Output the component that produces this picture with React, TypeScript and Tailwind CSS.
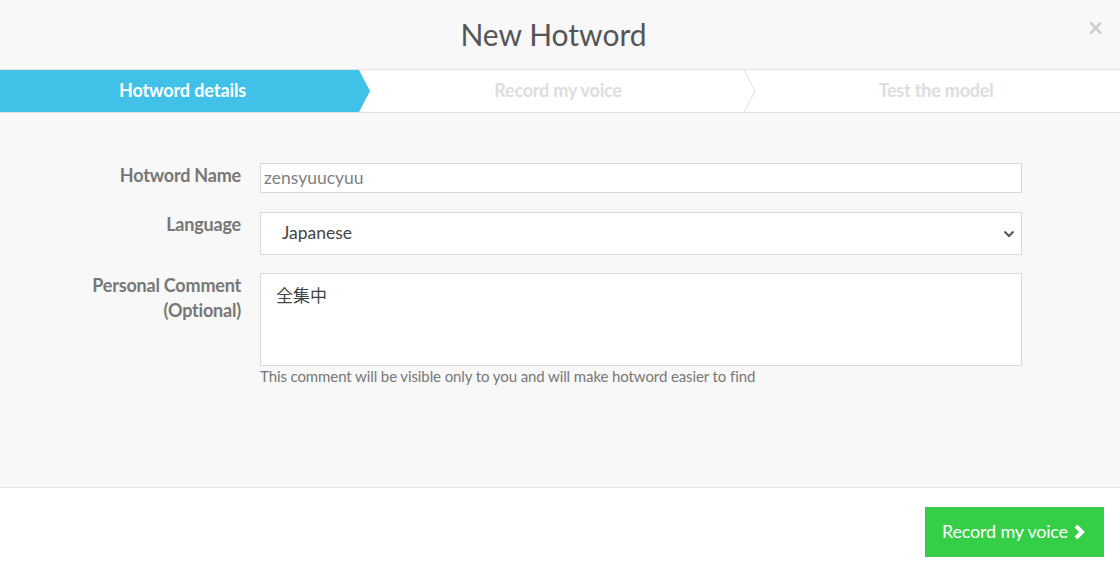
import React from "react";

function Chevron() {
  return (
    <svg width="13" height="42" viewBox="0 0 13 42" className="absolute left-[370px] top-0">
      <polyline points="1,0 12,21 1,42" fill="none" stroke="#dedede" strokeWidth="1" />
    </svg>
  );
}

export default function App() {
  return (
    <div className="w-[1120px] h-[572px] bg-white flex flex-col text-[#555]" style={{ fontFamily: "Lato, 'Noto Sans CJK JP', sans-serif" }}>
      <div className="h-[69px] bg-[#f8f8f8] relative flex items-center justify-center pr-[13px]">
        <h1 className="text-[30px] leading-none text-[#555] -mt-[2px]">New Hotword</h1>
        <span className="absolute right-[17px] top-[14px] text-[26px] leading-none text-[#cdcdcd] font-bold">×</span>
      </div>
      <div className="h-[44px] flex border-y border-[#e2e2e2] bg-white">
        <div className="w-[373px] relative">
          <div className="absolute inset-0 w-[371px] bg-[#41c0e8] [clip-path:polygon(0_0,359px_0,370px_50%,359px_100%,0_100%)]" />
          <div className="relative h-full flex items-center justify-center pr-[8px] pb-[2px] text-[18px] font-bold text-white tracking-[-0.1px]">Hotword details</div>
        </div>
        <div className="w-[373px] relative">
          <div className="h-full flex items-center justify-center pr-[3px] pb-[2px] text-[18px] font-bold text-[#dddddd] tracking-[-0.2px]">Record my voice</div>
          <Chevron />
        </div>
        <div className="flex-1 flex items-center justify-center pl-[6px] pb-[2px] text-[18px] font-bold text-[#dddddd] tracking-[-0.2px]">Test the model</div>
      </div>
      <div className="h-[375px] bg-[#f8f8f8] border-b border-[#e5e5e5] pt-[50px]">
        <div className="flex flex-col gap-[19px]">
          <div className="flex gap-[19px]">
            <div className="w-[241px] text-right text-[18px] leading-[25px] font-bold text-[#777] tracking-[-0.2px]">Hotword Name</div>
            <div className="w-[762px] h-[30px] bg-white border border-[#d9d9d9] flex items-center pl-[3px] text-[17.5px] text-[#808080]">zensyuucyuu</div>
          </div>
          <div className="flex gap-[19px]">
            <div className="w-[241px] text-right text-[18px] leading-[25px] font-bold text-[#777] tracking-[-0.2px]">Language</div>
            <div className="w-[762px] h-[43px] bg-white border border-[#d9d9d9] flex items-center pl-[21px] pr-[6px] text-[17.5px] text-[#444]">
              <span className="flex-1">Japanese</span>
              <svg width="12" height="8" viewBox="0 0 12 8">
                <polyline points="1.5,1.5 6,6 10.5,1.5" fill="none" stroke="#555" strokeWidth="2" />
              </svg>
            </div>
          </div>
          <div className="flex gap-[19px] -mt-[1px]">
            <div className="w-[241px] text-right text-[18px] leading-[25px] font-bold text-[#777] tracking-[-0.2px]">
              Personal Comment
              <br />
              (Optional)
            </div>
            <div className="w-[762px] flex flex-col">
              <div className="h-[93px] bg-white border border-[#d9d9d9] pl-[15px] pt-[9px] text-[17px] text-[#444]">全集中</div>
              <div className="text-[15px] text-[#777] leading-[20px] tracking-[-0.1px]">This comment will be visible only to you and will make hotword easier to find</div>
            </div>
          </div>
        </div>
      </div>
      <div className="flex-1 flex justify-end items-start pt-[19px] pr-[16px]">
        <button className="w-[179px] h-[50px] bg-[#34cf46] text-white text-[18px] flex items-center justify-center gap-[5px] pb-[1px] tracking-[-0.2px]">
          Record my voice
          <svg width="14" height="16" viewBox="0 0 14 16">
            <polyline points="3,2 9,8 3,14" fill="none" stroke="#fff" strokeWidth="4" />
          </svg>
        </button>
      </div>
    </div>
  );
}
